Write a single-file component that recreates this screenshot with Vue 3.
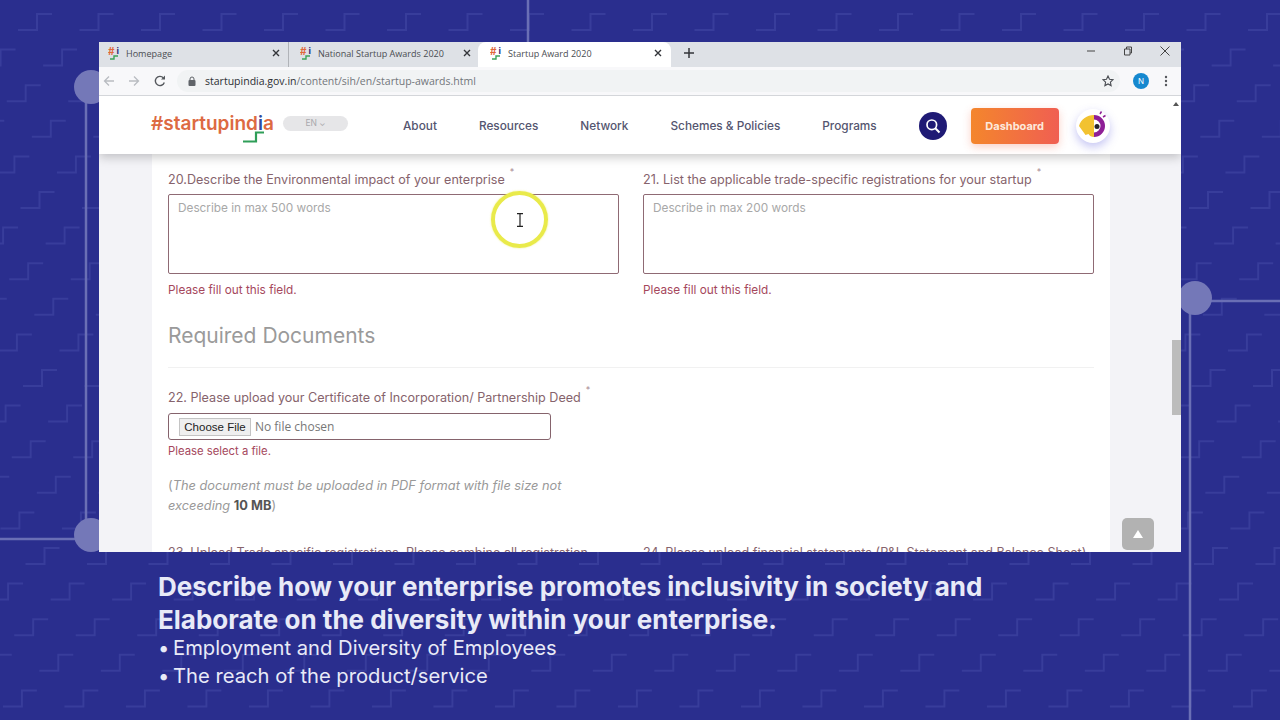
<script setup>
const tabs = [
  { title: 'Homepage', cls: 'tab-one' },
  { title: 'National Startup Awards 2020', cls: 'tab-two' },
  { title: 'Startup Award 2020', cls: 'tab-three' }
]
const navItems = ['About', 'Resources', 'Network', 'Schemes & Policies', 'Programs']

// background stairs: each row moves right a little, columns repeat every 61.5px
let stairPath = ''
for (let row = 0; row < 20; row++) {
  const y = 13 + row * 35.6
  for (let x = ((18 + row * 25.1) % 61.5) - 61.5; x < 1280; x += 61.5) {
    stairPath += `M${x.toFixed(1)} ${(y + 17).toFixed(1)}h19v-16h15`
  }
}
</script>

<template>
  <div class="stage">
    <svg class="backdrop" width="1280" height="720">
      <path :d="stairPath" fill="none" stroke="#383d9b" stroke-width="2" />
      <g fill="none" stroke="#6a6fb5" stroke-width="2.5">
        <path d="M528 0v42M86 100v440M0 539h80M1190 298v422M1195 301h85" />
      </g>
      <g fill="#7478b8">
        <circle cx="91" cy="87" r="17" />
        <circle cx="91" cy="535" r="17" />
        <circle cx="1195" cy="298" r="17" />
      </g>
    </svg>

    <div class="browser">
      <div class="tabstrip">
        <div v-for="tab in tabs" :key="tab.title" class="tab" :class="tab.cls">
          <svg class="favicon" width="14" height="14" viewBox="0 0 14 14">
            <text x="0" y="9" font-size="10" font-weight="700" font-family="Inter, sans-serif" fill="#e0673a">#</text>
            <text x="8.5" y="8" font-size="9" font-weight="700" font-family="Inter, sans-serif" fill="#2b2a7a">i</text>
            <path d="M2 13h4v-3h4" fill="none" stroke="#3da35a" stroke-width="1.4" />
          </svg>
          <span class="tab-title">{{ tab.title }}</span>
          <svg class="tab-close" width="8" height="8" viewBox="0 0 8 8">
            <path d="M1 1l6 6M7 1l-6 6" stroke="#33353a" stroke-width="1.4" />
          </svg>
        </div>
        <svg class="new-tab" width="12" height="12" viewBox="0 0 12 12">
          <path d="M6 1v10M1 6h10" stroke="#33353a" stroke-width="1.5" />
        </svg>
        <div class="win-controls">
          <svg width="10" height="10" viewBox="0 0 10 10"><path d="M1 5h8" stroke="#444" stroke-width="1" /></svg>
          <svg width="10" height="10" viewBox="0 0 10 10"><path d="M1.5 3h5.5v6h-5.5zM3.5 3v-2h5v6h-1.500" fill="none" stroke="#444" stroke-width="1" /></svg>
          <svg width="10" height="10" viewBox="0 0 10 10"><path d="M.5 .5l9 9M9.5 .5l-9 9" stroke="#444" stroke-width="1" /></svg>
        </div>
      </div>

      <div class="toolbar">
        <svg class="nav-arrow" width="12" height="12" viewBox="0 0 12 12">
          <path d="M11 6H1.5M6 1.5L1.5 6 6 10.5" fill="none" stroke="#b9bcc1" stroke-width="1.3" />
        </svg>
        <svg class="nav-arrow" width="12" height="12" viewBox="0 0 12 12">
          <path d="M1 6h9.5M6 1.5L10.5 6 6 10.5" fill="none" stroke="#b9bcc1" stroke-width="1.3" />
        </svg>
        <svg class="reload" width="12" height="12" viewBox="0 0 12 12">
          <path d="M10.3 7.5A4.6 4.6 0 1 1 9.3 2.8" fill="none" stroke="#55585d" stroke-width="1.4" />
          <path d="M11 .5v4H7z" fill="#55585d" />
        </svg>
        <div class="omnibox">
          <svg width="8" height="10" viewBox="0 0 8 10">
            <rect x="0.5" y="4" width="7" height="6" rx="1" fill="#5f6368" />
            <path d="M2 4V3a2 2 0 0 1 4 0v1" fill="none" stroke="#5f6368" stroke-width="1" />
          </svg>
          <span class="url"><b>startupindia.gov.in</b>/content/sih/en/startup-awards.html</span>
          <svg class="star" width="12" height="12" viewBox="0 0 12 12">
            <path d="M6 1l1.5 3.3 3.5.4-2.6 2.400.7 3.500L6 8.900l-3.100 1.700.7-3.500L1 4.700l3.500-.4z" fill="none" stroke="#4a4d52" stroke-width="1.1" />
          </svg>
        </div>
        <span class="profile">N</span>
        <svg width="4" height="12" viewBox="0 0 4 12" class="dots">
          <circle cx="2" cy="2" r="1.2" fill="#55585d" />
          <circle cx="2" cy="6" r="1.2" fill="#55585d" />
          <circle cx="2" cy="10" r="1.2" fill="#55585d" />
        </svg>
      </div>

      <div class="viewport">
        <header class="site-header">
          <div class="logo">
            <span class="logo-text">#startupind<i>i</i>a</span>
            <svg class="logo-stair" width="21" height="12" viewBox="0 0 21 12">
              <path d="M0 10.5h13V1.5h8" fill="none" stroke="#2f9e58" stroke-width="2.2" />
            </svg>
          </div>
          <div class="lang">EN <span class="chev">⌄</span></div>
          <nav class="site-nav">
            <a v-for="item in navItems" :key="item">{{ item }}</a>
          </nav>
          <button class="search-btn">
            <svg width="16" height="16" viewBox="0 0 16 16">
              <circle cx="6.8" cy="6.8" r="4.8" fill="none" stroke="#fff" stroke-width="1.7" />
              <path d="M10.3 10.3L14.5 14.5" stroke="#fff" stroke-width="2" />
            </svg>
          </button>
          <button class="dash-btn">Dashboard</button>
          <div class="mascot">
            <svg width="34" height="34" viewBox="0 0 34 34">
              <path d="M18 6a11 11 0 0 1 0 22v-4.500a6.500 6.500 0 0 0 0-13z" fill="#8e1f96" />
              <path d="M18 6v22c-2.500 0-4.500-1-5.500-3l-3 1L3 17C5 10 11 6 18 6z" fill="#f2c230" />
              <circle cx="21" cy="17.5" r="2.5" fill="#26242e" />
              <path d="M24 5l1.500-2.500M27 8l2.500-1.500" stroke="#8e1f96" stroke-width="1.5" />
            </svg>
          </div>
        </header>

        <div class="page">
          <div class="gutter"></div>
          <main class="sheet">
            <div class="two-col">
              <div>
                <label class="q-label">20.Describe the Environmental impact of your enterprise<sup>*</sup></label>
                <textarea class="answer" placeholder="Describe in max 500 words"></textarea>
                <p class="err">Please fill out this field.</p>
              </div>
              <div>
                <label class="q-label">21. List the applicable trade-specific registrations for your startup<sup>*</sup></label>
                <textarea class="answer" placeholder="Describe in max 200 words"></textarea>
                <p class="err">Please fill out this field.</p>
              </div>
            </div>

            <h2 class="section-title">Required Documents</h2>
            <hr class="rule" />

            <label class="q-label">22. Please upload your Certificate of Incorporation/ Partnership Deed<sup>*</sup></label>
            <div class="file-box">
              <button class="file-btn">Choose File</button>
              <span class="file-name">No file chosen</span>
            </div>
            <p class="err file-err">Please select a file.</p>
            <p class="note">(<em>The document must be uploaded in PDF format with file size not exceeding</em> <b>10 MB</b>)</p>

            <div class="two-col cut-row">
              <label class="q-label">23. Upload Trade specific registrations. Please combine all registration</label>
              <label class="q-label">24. Please upload financial statements (P&amp;L Statement and Balance Sheet)</label>
            </div>
          </main>
          <div class="gutter-right">
            <span class="scroll-up"></span>
            <span class="scroll-thumb"></span>
            <button class="to-top"><span></span></button>
          </div>
        </div>

        <div class="cursor-ring">
          <svg width="8" height="14" viewBox="0 0 8 14">
            <path d="M1 .7h6M4 .7v12.600M1 13.300h6" fill="none" stroke="#222" stroke-width="1.2" />
          </svg>
        </div>
      </div>
    </div>

    <section class="caption">
      <h1>Describe how your enterprise promotes inclusivity in society and<br />Elaborate on the diversity within your enterprise.</h1>
      <ul>
        <li><span class="dot">•</span>Employment and Diversity of Employees</li>
        <li><span class="dot">•</span>The reach of the product/service</li>
      </ul>
    </section>
  </div>
</template>

<style>
html,
body {
  margin: 0;
  background: #2a2e8e;
}
</style>

<style scoped>
.stage {
  position: relative;
  width: 1280px;
  height: 720px;
  overflow: hidden;
  background: #2a2e8e;
  font-family: Inter, sans-serif;
}

.backdrop {
  position: absolute;
  left: 0;
  top: 0;
}

.browser {
  position: relative;
  width: 1082px;
  height: 510px;
  margin: 42px 0 0 99px;
  background: #fff;
  display: flex;
  flex-direction: column;
  overflow: hidden;
}

/* chrome */
.tabstrip {
  height: 25px;
  background: #dee1e6;
  display: flex;
  align-items: center;
  flex-shrink: 0;
}

.tab {
  height: 100%;
  display: flex;
  align-items: center;
  box-sizing: border-box;
  font-family: 'Open Sans', sans-serif;
  font-size: 9.05px;
  color: #4a4d52;
}

.tab-one {
  width: 190px;
  padding: 0 8px 3px 9px;
  border-right: 1px solid #b0b3b8;
}

.tab-two {
  width: 189px;
  padding: 0 7px 3px 11px;
}

.tab-three {
  width: 193px;
  padding: 0 9px 3px 12px;
  background: #fff;
  border-radius: 8px 8px 0 0;
}

.favicon {
  flex-shrink: 0;
}

.tab-title {
  flex: 1;
  margin-left: 4px;
  white-space: nowrap;
}

.new-tab {
  margin: 0 0 3px 12px;
}

.win-controls {
  margin-left: auto;
  display: flex;
  gap: 27px;
  padding: 0 11px 7px 0;
}

.toolbar {
  height: 29px;
  background: #f8f8fa;
  border-bottom: 1px solid #d4d6da;
  box-sizing: border-box;
  display: flex;
  align-items: center;
  padding-left: 4px;
  flex-shrink: 0;
}

.nav-arrow {
  margin-right: 13px;
}

.reload {
  margin-left: 1px;
}

.omnibox {
  width: 943px;
  height: 22px;
  margin-left: 11px;
  padding: 0 6px 0 11px;
  box-sizing: border-box;
  background: #f1f3f4;
  border-radius: 11px;
  display: flex;
  align-items: center;
}

.url {
  margin-left: 9px;
  font-family: 'Open Sans', sans-serif;
  font-size: 10.52px;
  color: #72767b;
}

.url b {
  font-weight: 400;
  color: #2c2f33;
}

.star {
  margin-left: auto;
}

.profile {
  width: 16px;
  height: 16px;
  margin-left: 13px;
  border-radius: 50%;
  background: #1688cf;
  color: #fff;
  font-size: 8px;
  line-height: 16px;
  text-align: center;
}

.dots {
  margin-left: 15px;
}

/* page */
.viewport {
  position: relative;
  flex: 1;
  display: flex;
  flex-direction: column;
  overflow: hidden;
}

.site-header {
  position: relative;
  z-index: 2;
  height: 58px;
  box-sizing: border-box;
  padding: 2px 0 0 52px;
  background: #fff;
  box-shadow: 0 3px 10px rgba(0, 0, 0, 0.22);
  display: flex;
  align-items: center;
  flex-shrink: 0;
}

.logo {
  position: relative;
  width: 125px;
  height: 56px;
}

.logo-text {
  position: absolute;
  left: 0;
  top: 14px;
  font-size: 19px;
  font-weight: 600;
  color: #dd6a42;
  white-space: nowrap;
}

.logo-text i {
  font-style: normal;
  color: #2f4aa0;
}

.logo-stair {
  position: absolute;
  left: 92px;
  top: 33px;
}

.lang {
  width: 65px;
  height: 15px;
  margin-left: 7px;
  margin-bottom: 5px;
  border-radius: 8px;
  background: #e6e6e8;
  color: #a9a9ad;
  font-size: 8.5px;
  line-height: 15px;
  text-align: center;
}

.chev {
  font-size: 8px;
}

.site-nav {
  display: flex;
  gap: 42px;
  margin-left: 55px;
  font-size: 11.8px;
  font-weight: 500;
  color: #54556f;
}

.search-btn {
  width: 28px;
  height: 28px;
  margin-left: 42px;
  padding: 0;
  border: 0;
  border-radius: 50%;
  background: #1f1a75;
  display: flex;
  align-items: center;
  justify-content: center;
}

.dash-btn {
  width: 88px;
  height: 36px;
  margin-left: 24px;
  border: 0;
  border-radius: 4px;
  background: linear-gradient(90deg, #f4862c, #f05f52);
  box-shadow: 0 3px 8px rgba(240, 100, 70, 0.3);
  color: #fde9dc;
  font-family: Inter, sans-serif;
  font-size: 11px;
  font-weight: 700;
}

.mascot {
  width: 34px;
  height: 34px;
  margin-left: 17px;
  border-radius: 50%;
  background: #fff;
  box-shadow: 0 4px 10px rgba(90, 90, 220, 0.35);
}

.page {
  flex: 1;
  display: flex;
  min-height: 0;
}

.gutter {
  width: 53px;
  background: #f3f3f7;
  flex-shrink: 0;
}

.sheet {
  width: 958px;
  box-sizing: border-box;
  padding: 18px 16px 0;
  background: #fff;
  flex-shrink: 0;
  font-size: 12.6px;
}

.two-col {
  display: grid;
  grid-template-columns: 451px 451px;
  column-gap: 24px;
}

.q-label {
  display: block;
  height: 15px;
  line-height: 15px;
  color: #86636c;
  white-space: nowrap;
}

.q-label sup {
  position: relative;
  top: -4px;
  margin-left: 5px;
  font-size: 9px;
  line-height: 0;
  color: #a98a92;
}

.answer {
  display: block;
  width: 100%;
  height: 80px;
  margin-top: 7px;
  padding: 6px 9px;
  box-sizing: border-box;
  border: 1px solid #8f6a74;
  border-radius: 2px;
  outline: 0;
  resize: none;
  font-family: inherit;
  font-size: 11.8px;
}

.answer::placeholder {
  color: #a8a8a8;
}

.err {
  margin: 9px 0 0;
  font-size: 11.8px;
  line-height: 15px;
  color: #a5475c;
}

.section-title {
  margin: 26px 0 0;
  font-size: 21px;
  font-weight: 400;
  line-height: 24px;
  color: #9a9a9a;
}

.rule {
  margin: 19px 0 22px;
  border: 0;
  border-top: 1px solid #f1f1f1;
}

.file-box {
  width: 383px;
  height: 27px;
  margin-top: 8px;
  padding-left: 10px;
  box-sizing: border-box;
  border: 1px solid #85636c;
  border-radius: 3px;
  display: flex;
  align-items: center;
  gap: 4px;
}

.file-btn {
  width: 72px;
  height: 18px;
  padding: 0;
  border: 1px solid #c4c4c4;
  background: #efefef;
  color: #222;
  font-family: 'Liberation Sans', sans-serif;
  font-size: 11.5px;
}

.file-name {
  color: #777;
  font-family: 'Open Sans', sans-serif;
  font-size: 12px;
}

.file-err {
  margin-top: 4px;
  font-size: 11.3px;
}

.note {
  width: 440px;
  margin: 17px 0 0;
  font-size: 12.8px;
  line-height: 19.5px;
  color: #999;
}

.note b {
  color: #555;
}

.cut-row {
  margin-top: 30px;
}

.gutter-right {
  position: relative;
  flex: 1;
  background: #f3f3f7;
}

.scroll-up {
  position: absolute;
  right: 2px;
  top: -52px;
  z-index: 3;
  border: 3px solid transparent;
  border-top: 0;
  border-bottom: 4px solid #555;
}

.scroll-thumb {
  position: absolute;
  right: 0;
  top: 186px;
  width: 9px;
  height: 75px;
  background: #bcbcbc;
}

.to-top {
  position: absolute;
  left: 12px;
  bottom: 2px;
  width: 32px;
  height: 32px;
  padding: 0;
  border: 0;
  border-radius: 5px;
  background: #b2b2b2;
  display: flex;
  align-items: center;
  justify-content: center;
}

.to-top span {
  border: 5px solid transparent;
  border-top: 0;
  border-bottom: 8px solid #fff;
}

.cursor-ring {
  position: absolute;
  left: 392px;
  top: 95px;
  z-index: 3;
  width: 57px;
  height: 57px;
  box-sizing: border-box;
  border: 4px solid #e9ea4a;
  border-radius: 50%;
  box-shadow: 0 0 2px rgba(233, 234, 74, 0.7);
  display: flex;
  align-items: center;
  justify-content: center;
}

/* lower third */
.caption {
  position: relative;
  padding: 18px 0 0 158px;
  color: #e8eaf7;
}

.caption h1 {
  margin: 0 0 -2px;
  font-size: 26px;
  font-weight: 700;
  line-height: 33px;
  white-space: nowrap;
}

.caption ul {
  margin: 0;
  padding: 0;
  list-style: none;
  font-size: 20.2px;
  line-height: 28px;
}

.dot {
  display: inline-block;
  width: 15px;
}
</style>
